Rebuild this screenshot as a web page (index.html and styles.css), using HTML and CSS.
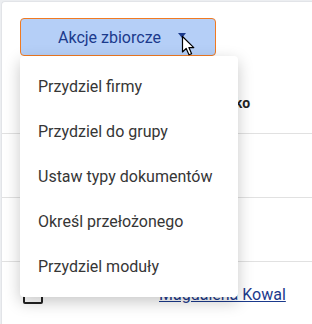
FILE: index.html
```html
<!DOCTYPE html>
<html lang="pl">
<head>
<meta charset="utf-8" />
<title>Akcje zbiorcze</title>
<link rel="stylesheet" href="styles.css">
</head>
<body>
	<div class="card">
		<div class="toolbar">
			<button class="bulk-btn" type="button">
				<span class="bulk-label">Akcje zbiorcze</span>
				<span class="caret"></span>
			</button>
			<svg class="pointer" width="16" height="22" viewBox="0 0 16 22">
				<path d="M1.5 1.5 L1.5 17 L5.2 13.5 L8 19.8 L10.6 18.7 L7.9 12.6 L12.8 12.6 Z" fill="#fff" stroke="#000" stroke-width="1.2" stroke-linejoin="round" />
			</svg>
			<ul class="menu">
				<li>Przydziel firmy</li>
				<li>Przydziel do grupy</li>
				<li>Ustaw typy dokumentów</li>
				<li>Określ przełożonego</li>
				<li>Przydziel moduły</li>
			</ul>
		</div>

		<div class="table">
			<div class="row head">
				<div class="cell-check"></div>
				<div class="cell-name">Imię i nazwisko</div>
			</div>
			<div class="row">
				<div class="cell-check"><span class="checkbox"></span></div>
				<div class="cell-name"></div>
			</div>
			<div class="row">
				<div class="cell-check"><span class="checkbox"></span></div>
				<div class="cell-name"></div>
			</div>
			<div class="row last">
				<div class="cell-check"><span class="checkbox"></span></div>
				<div class="cell-name"><a href="#">Magdalena Kowal</a></div>
			</div>
		</div>
	</div>
</body>
</html>
```

FILE: styles.css
```css
html, body { height: 100%; }

body {
	margin: 0;
	padding: 1px 0 0 1px;
	box-sizing: border-box;
	background: #eceef1;
	font-family: Roboto, "Liberation Sans", sans-serif;
	overflow: hidden;
}

.card {
	background: #fff;
	border: 1px solid #e2e4e8;
	border-right: 0;
	border-bottom: 0;
	border-radius: 4px 0 0 0;
	height: 100%;
	padding-top: 16px;
}

.toolbar {
	position: relative;
	padding-left: 18px;
}

.bulk-btn {
	display: flex;
	align-items: center;
	gap: 17px;
	width: 196px;
	height: 38px;
	box-sizing: border-box;
	padding: 0 0 0 37px;
	background: #b5cff7;
	border: 1.5px solid #f07a22;
	border-radius: 4px;
	font-family: inherit;
	font-size: 16px;
	color: #1b3a8c;
}

.caret {
	width: 0;
	height: 0;
	border-left: 4px solid transparent;
	border-right: 4px solid transparent;
	border-top: 5px solid #1b3a8c;
	margin-top: -4px;
}

.pointer {
	position: absolute;
	left: 179px;
	top: 17px;
	z-index: 3;
}

.menu {
	position: absolute;
	left: 18px;
	top: 38px;
	z-index: 2;
	width: 218px;
	margin: 0;
	padding: 8px 0;
	list-style: none;
	background: #fff;
	border-radius: 4px;
	box-shadow: 0 5px 16px rgba(0, 0, 0, 0.22);
}

.menu li {
	height: 45px;
	line-height: 45px;
	padding-left: 18px;
	font-size: 16px;
	color: #363636;
}

.row {
	display: flex;
	align-items: center;
	height: 64px;
	box-sizing: border-box;
	border-bottom: 1px solid #e1e1e1;
}

.row.head {
	height: 78px;
	align-items: flex-end;
	padding-bottom: 22px;
	font-weight: bold;
	font-size: 14px;
	color: #222;
}

.row.head .cell-check {
	width: 151px;
}

.row.last {
	border-bottom: 0;
}

.cell-check {
	width: 157px;
	padding-left: 21px;
	box-sizing: border-box;
}

.checkbox {
	display: block;
	width: 16px;
	height: 16px;
	border: 2px solid #222;
	border-radius: 2px;
}

.cell-name a {
	font-size: 16px;
	color: #1b3a8c;
}
```
